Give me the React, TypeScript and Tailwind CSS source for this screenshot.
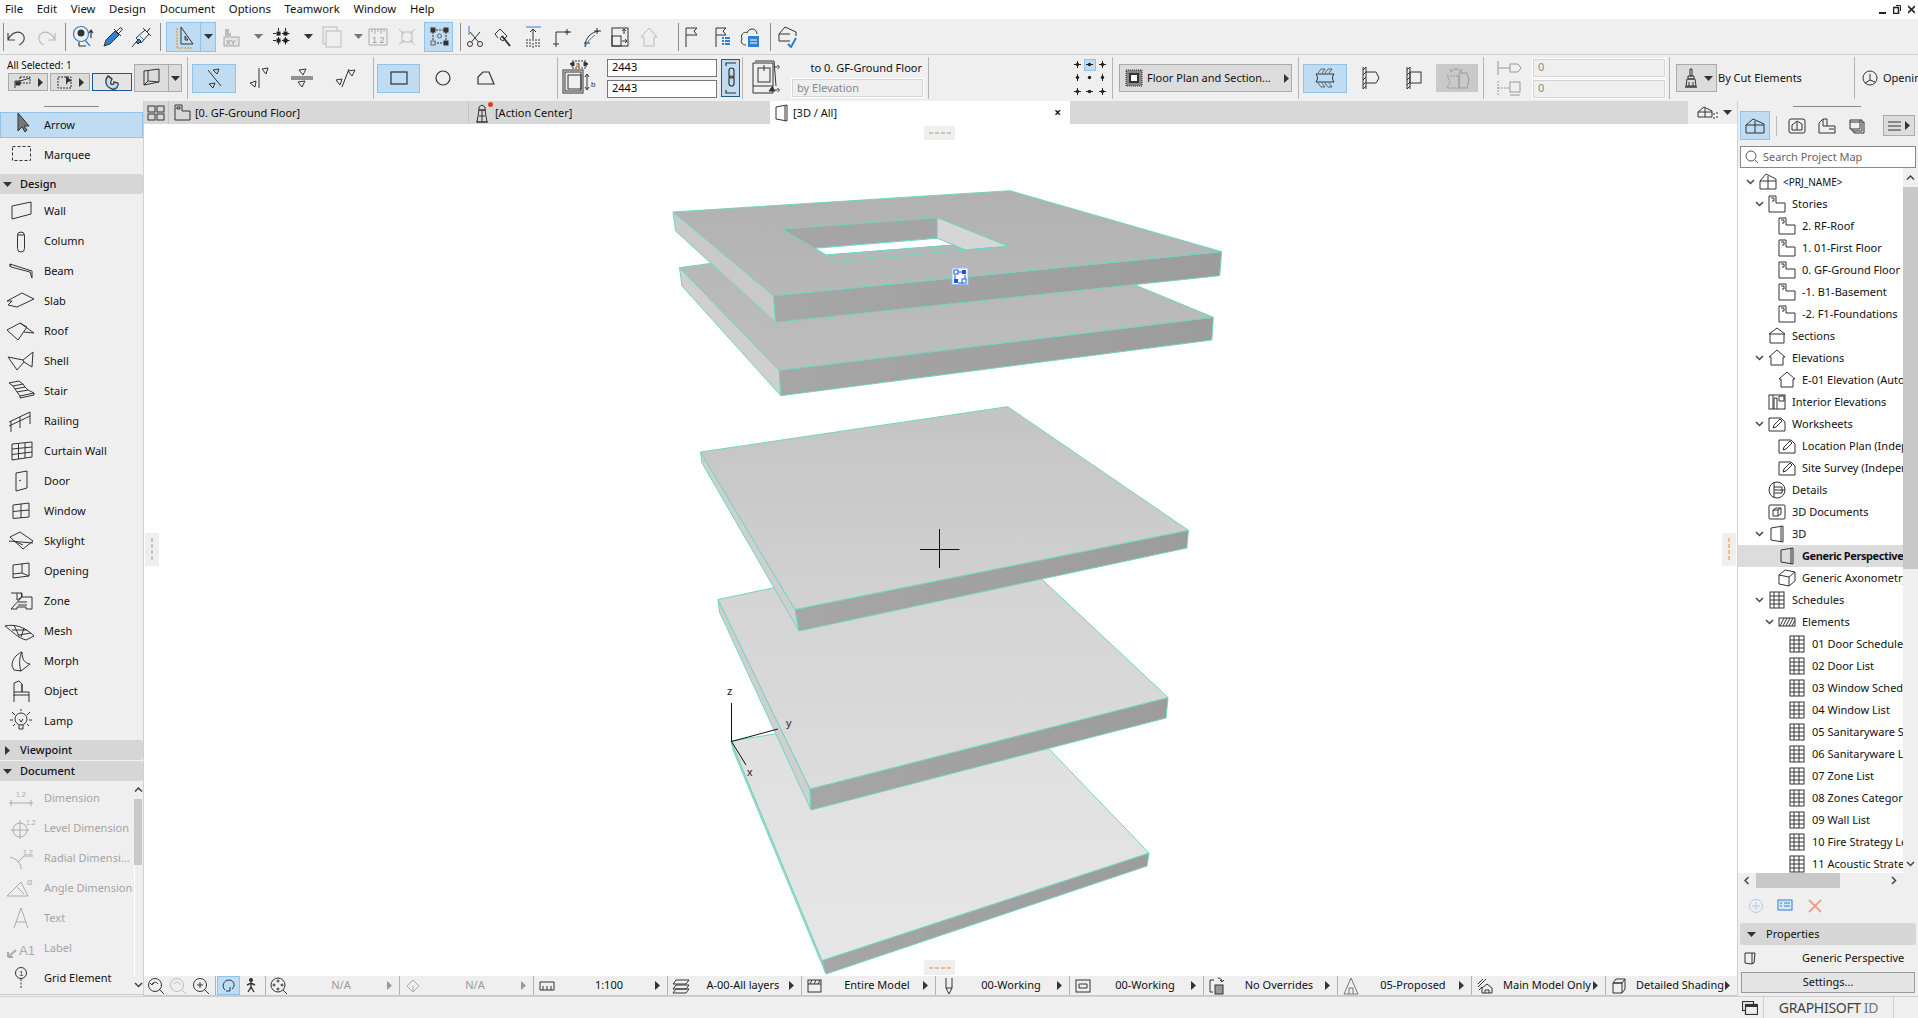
// App.tsx: BIM editor main window (3D view with selected slabs)
import React from 'react'

type SProps = { w: number; h: number; c?: string; sw?: number; fill?: string; className?: string; children: React.ReactNode }

const S = ({ w, h, c = '#333', sw = 1, fill = 'none', className = '', children }: SProps) => (
  <svg width={w} height={h} viewBox={`0 0 ${w} ${h}`} fill={fill} stroke={c} strokeWidth={sw} className={`shrink-0 ${className}`}>
    {children}
  </svg>
)

const Down = ({ c = '#333' }: { c?: string }) => (
  <svg width="9" height="5" viewBox="0 0 9 5" className="shrink-0"><path d="M0 0H9L4.5 5Z" fill={c} /></svg>
)
const Right = ({ c = '#333' }: { c?: string }) => (
  <svg width="5" height="9" viewBox="0 0 5 9" className="shrink-0"><path d="M0 0L5 4.5L0 9Z" fill={c} /></svg>
)
const Chev = ({ d = 'down' }: { d?: 'down' | 'up' | 'left' | 'right' }) => {
  const p = d === 'down' ? 'M1 1L4.5 4.5L8 1' : d === 'up' ? 'M1 4.5L4.5 1L8 4.5' : d === 'left' ? 'M4.5 1L1 4.5L4.5 8' : 'M1 1L4.5 4.5L1 8'
  const small = d === 'down' || d === 'up'
  return (
    <svg width={small ? 9 : 6} height={small ? 6 : 9} viewBox={small ? '0 0 9 6' : '0 0 6 9'} fill="none" stroke="#444" strokeWidth="1.5" className="shrink-0">
      <path d={p} />
    </svg>
  )
}

const Cell = ({ className, children }: { className: string; children?: React.ReactNode }) => (
  <div className={`h-full shrink-0 flex items-center justify-center ${className}`}>{children}</div>
)
const Sep = () => <div className="w-px h-[28px] bg-[#8c8c8c] shrink-0" />

// top toolbar icons
const icons = {
  undo: <S w={22} h={20} c="#444" sw={1.2}><path d="M2 6V13H9M2 13C5 6 11 4 15 6C20 9 19 15 13 18" /></S>,
  redo: <S w={22} h={20} c="#bbb" sw={1.2}><path d="M20 6V13H13M20 13C17 6 11 4 7 6C2 9 3 15 9 18" /></S>,
  find: <S w={22} h={24} c="#2e7fd6" sw={1.2}><circle cx="9" cy="9" r="7.5" /><circle cx="9" cy="8" r="3.5" fill="#333" stroke="none" /><path d="M13 15L18 21" /><path d="M19 6V13M17 8L19 5L21 8" stroke="#333" /><path d="M7 21H14M7 17V21" stroke="#333" /></S>,
  dropper: <S w={22} h={24} c="#333"><path d="M3 21L5 15L14 6L18 10L9 19Z" fill="#2e7fd6" /><path d="M13 4L20 11M16 6L19 3C20 2 22 4 21 5L18 8" /></S>,
  syringe: <S w={22} h={24} c="#333"><path d="M2 22L6 17M6 13L11 18L19 9L15 5Z" /><path d="M6 17L9 14L11 16L8 19Z" fill="#2e7fd6" /><path d="M13 3L21 11M17 7L20 3" /><path d="M10 11L14 15" stroke="#2e7fd6" /></S>,
  ruler: <S w={22} h={24} c="#333"><path d="M8 2V19H20Z" /><path d="M12 11V15H15Z" /><path d="M4 3V23H20" stroke="#e8891a" strokeDasharray="2 1" /></S>,
  xy: <S w={18} h={20} c="#aaa"><path d="M2 2H6V6H8V9H2Z" fill="#bbb" stroke="none" /><rect x="1" y="10" width="15" height="9" fill="#e4e4e4" /><text x="3" y="18" fontSize="7" fill="#888" stroke="none" fontFamily="Liberation Sans">XY</text></S>,
  grid: <S w={20} h={20} c="#222"><path d="M6.5 1V19M13.5 1V19M1 6.5H19M1 13.5H19" strokeDasharray="3 1.5" /><rect x="5" y="5" width="3" height="3" fill="#222" /><rect x="12" y="5" width="3" height="3" fill="#222" /><rect x="5" y="12" width="3" height="3" fill="#222" /><rect x="12" y="12" width="3" height="3" fill="#222" /></S>,
  layers: <S w={20} h={22} c="#bbb"><rect x="1" y="1" width="14" height="17" /><rect x="4" y="5" width="15" height="16" fill="#efefef" /></S>,
  scale12: <S w={20} h={18} c="#aaa"><path d="M1 1V17H19V1H1M4 1V4M7 1V6M10 1V4M13 1V6M16 1V4" /><text x="4" y="15" fontSize="9" fill="#999" stroke="none" fontFamily="Liberation Sans">1 2</text></S>,
  cross: <S w={16} h={16} c="#bbb"><rect x="3" y="3" width="10" height="10" /><path d="M0 0L5 5M16 0L11 5M0 16L5 11M16 16L11 11" /></S>,
  sel: <S w={22} h={22} c="#333"><rect x="5" y="4" width="13" height="13" strokeDasharray="2 1" /><rect x="3" y="2" width="4" height="4" fill="#333" /><rect x="16" y="2" width="4" height="4" fill="#333" /><rect x="3" y="15" width="4" height="4" fill="#bfdcf3" stroke="#666" /><rect x="16" y="15" width="4" height="4" fill="#333" /><circle cx="11.5" cy="10" r="2" stroke="#666" /></S>,
  scissors: <S w={18} h={24} c="#333"><path d="M3 1V10" stroke="#2e7fd6" /><circle cx="4" cy="19" r="2.5" /><circle cx="14" cy="19" r="2.5" /><path d="M5.5 17L14 7M12.5 17L4 7" /></S>,
  bucket: <S w={22} h={22} c="#333"><path d="M3 8L8 3L15 10L11 15L8 13L10 10" /><path d="M10 10L18 20" strokeWidth="2" /><path d="M3 8L6 12" /></S>,
  extend: <S w={20} h={24} c="#333"><path d="M3 2H18" stroke="#2e7fd6" /><path d="M10 4V16M7 7L10 4L13 7" /><path d="M4 14V23M7 14V23M10 18V23M13 14V23M16 14V23" strokeDasharray="2 1" /></S>,
  corner: <S w={20} h={22} c="#333"><path d="M4 21V6H17" /><path d="M1 18H7M15 3V9M13 6H19" /></S>,
  arc: <S w={20} h={22} c="#333"><path d="M3 21C3 12 9 6 17 5" /><path d="M15 2V8M12 5H19M2 17H8" /><path d="M3 21C5 16 9 12 13 9" stroke="#2e7fd6" /></S>,
  box: <S w={18} h={20} c="#333"><rect x="1" y="1" width="16" height="18" /><rect x="1" y="9" width="9" height="10" /><path d="M13 2V7M11 4L13 2L15 4M11 14H16M14 12L16 14L14 16" /></S>,
  houseG: <S w={18} h={22} c="#bbb"><path d="M1 11L9 2L17 11H14V20H4V11Z" /></S>,
  flag: <S w={14} h={20} c="#333"><path d="M2 20V1H13L10 4L13 8H2" /></S>,
  flagList: <S w={16} h={20} c="#333"><path d="M2 20V1H12L9 4L12 8H2" /><path d="M8 11H10M8 14H10M8 17H10M11 11H16M11 14H16M11 17H16" stroke="#2e7fd6" strokeWidth="2" /></S>,
  cloud: <S w={20} h={22} c="#333"><path d="M6 19C2 19 0 16 2 13C0 8 5 5 7 7C9 1 17 2 17 8" /><rect x="8" y="10" width="11" height="11" fill="#2e7fd6" stroke="none" /><path d="M10 14H17M10 17H17" stroke="#fff" /></S>,
  houseCheck: <S w={20} h={22} c="#333"><path d="M1 8L7 1L18 6V10M1 8V15H12M1 8H12" /><path d="M10 18L13 21L18 12" stroke="#2e7fd6" strokeWidth="2" /></S>,
}

const Blue = ({ className, children }: { className: string; children?: React.ReactNode }) => (
  <div className={`shrink-0 flex items-center justify-center bg-[#bfdcf3] border border-[#8fc3ec] ${className}`}>{children}</div>
)

function TopBar() {
  return (
    <div className="h-[36px] flex items-center border-b border-[#d0d0d0] shrink-0">
      <Cell className="w-[3px]" /><Sep />
      <Cell className="w-[26px]">{icons.undo}</Cell>
      <Cell className="w-[32px]">{icons.redo}</Cell>
      <Cell className="w-[3px]" /><Sep />
      <Cell className="w-[34px]">{icons.find}</Cell>
      <Cell className="w-[24px]">{icons.dropper}</Cell>
      <Cell className="w-[34px]">{icons.syringe}</Cell>
      <Cell className="w-[2px]" /><Sep />
      <Cell className="w-[5px]" />
      <Blue className="w-[50px] h-[30px]">
        <div className="w-[33px] flex justify-center">{icons.ruler}</div>
        <div className="w-px h-full bg-[#8fc3ec]" />
        <div className="flex-1 flex justify-center"><Down /></div>
      </Blue>
      <Cell className="w-[32px]">{icons.xy}</Cell>
      <Cell className="w-[20px]"><Down c="#777" /></Cell>
      <Cell className="w-[28px]">{icons.grid}</Cell>
      <Cell className="w-[24px]"><Down /></Cell>
      <Cell className="w-[24px]">{icons.layers}</Cell>
      <Cell className="w-[28px]"><Down c="#777" /></Cell>
      <Cell className="w-[12px]">{icons.scale12}</Cell>
      <Cell className="w-[6px]" />
      <Cell className="w-[34px]">{icons.cross}</Cell>
      <Blue className="w-[29px] h-[30px]">{icons.sel}</Blue>
      <Cell className="w-[7px]" /><Sep />
      <Cell className="w-[28px]">{icons.scissors}</Cell>
      <Cell className="w-[28px]">{icons.bucket}</Cell>
      <Cell className="w-[32px]">{icons.extend}</Cell>
      <Cell className="w-[26px]">{icons.corner}</Cell>
      <Cell className="w-[34px]">{icons.arc}</Cell>
      <Cell className="w-[22px]">{icons.box}</Cell>
      <Cell className="w-[36px]">{icons.houseG}</Cell>
      <Cell className="w-[11px]" /><Sep />
      <Cell className="w-[24px]">{icons.flag}</Cell>
      <Cell className="w-[38px]">{icons.flagList}</Cell>
      <Cell className="w-[18px]">{icons.cloud}</Cell>
      <Cell className="w-[11px]" /><Sep />
      <Cell className="w-[34px]">{icons.houseCheck}</Cell>
    </div>
  )
}

const Grp = ({ className, children }: { className: string; children: React.ReactNode }) => (
  <div className={`h-[42px] shrink-0 flex items-center border-r border-[#b4b4b4] ${className}`}>{children}</div>
)

const GrayBtn = ({ className, children }: { className: string; children?: React.ReactNode }) => (
  <div className={`shrink-0 flex items-center bg-[#dcdcdc] border border-[#aaa] ${className}`}>{children}</div>
)

const Field = ({ children, gray }: { children: React.ReactNode; gray?: boolean }) => (
  <div className={`h-[18px] flex items-center pl-[4px] border ${gray ? 'bg-[#efefef] border-[#d4d4d4] outline outline-1 outline-white text-[#888]' : 'bg-white border-[#777] text-black'}`}>{children}</div>
)

// the nine anchor points of the size box
const anchors = [
  'M4.5 1V8M1 4.5H8', 'M1 4.5H8', 'M4.5 1V8M1 4.5H8',
  'M4.5 1V8', '', 'M4.5 1V8',
  'M4.5 1V8M1 4.5H8', 'M1 4.5H8', 'M4.5 1V8M1 4.5H8',
]

function InfoBar() {
  return (
    <div className="h-[46px] flex items-center shrink-0 text-[11px] text-[#111]">
      <Grp className="w-[188px] items-start">
        <div className="w-[134px] pl-[7px] h-full flex flex-col">
          <div className="h-[14px] mt-[1px] text-[10px] leading-[14px] whitespace-nowrap">All Selected: 1</div>
          <div className="flex gap-[2px] ml-px mt-[1px]">
            <GrayBtn className="w-[40px] h-[18px] justify-center gap-[6px]">
              <S w={18} h={14} c="#333"><path d="M1 13V6H6L16 3" /><rect x="6" y="2" width="10" height="6" strokeDasharray="2 1" /><path d="M2 7H6V10H2Z" fill="#333" /></S>
              <Right />
            </GrayBtn>
            <GrayBtn className="w-[40px] h-[18px] justify-center gap-[6px]">
              <S w={16} h={14} c="#333"><rect x="1" y="2" width="13" height="11" strokeDasharray="2 1" /><path d="M9 1L15 6L11 7L9 10Z" fill="#333" stroke="none" /></S>
              <Right />
            </GrayBtn>
            <div className="w-[40px] h-[18px] bg-[#e4e4e4] border border-[#1a5a96] flex items-center justify-center">
              <S w={18} h={18} c="#444" sw={1.4}><path d="M5 3C1 8 3 14 9 16C13 17 16 13 15 10L11 9C11 11 10 12 8 11C7 10 8 8 9 6Z" fill="#bfdcf3" /><path d="M5 3L9 6" /></S>
            </div>
          </div>
        </div>
        <GrayBtn className="w-[48px] h-[28px] mt-[7px] justify-start">
          <div className="w-[34px] flex justify-center border-r border-[#aaa] h-full items-center">
            <S w={20} h={20} c="#333"><path d="M2 3L17 1V14L2 17Z" /><path d="M6 2.5V13L2 17M6 13L17 14" /></S>
          </div>
          <div className="flex-1 flex justify-center"><Down /></div>
        </GrayBtn>
      </Grp>
      <Grp className="w-[186px]">
        <div className="w-[4px]" />
        <Blue className="w-[44px] h-[29px]">
          <S w={26} h={22} c="#333"><path d="M7 3L20 19" /><path d="M12 3L18 2L16 7Z M8 17L14 16L12 21Z" /></S>
        </Blue>
        <Cell className="w-[45px]"><S w={26} h={24} c="#333"><path d="M13 2V22" /><path d="M16 3L22 2L20 8Z M4 17L10 15L9 21Z" /></S></Cell>
        <Cell className="w-[42px]"><S w={26} h={24} c="#333"><path d="M2 11H24M2 13H24" /><path d="M10 4L17 3L14 9Z M9 16L16 15L13 21Z" /></S></Cell>
        <Cell className="w-[44px]"><S w={26} h={24} c="#333"><path d="M10 21L17 3" /><path d="M16 5L23 4L20 10Z M4 14L10 13L8 19Z" /></S></Cell>
      </Grp>
      <Grp className="w-[184px]">
        <div className="w-[3px]" />
        <Blue className="w-[43px] h-[29px]"><S w={18} h={14} c="#333" sw={1.2}><rect x="1" y="1" width="16" height="12" /></S></Blue>
        <Cell className="w-[46px]"><S w={16} h={16} c="#333" sw={1.2}><circle cx="8" cy="8" r="7" /></S></Cell>
        <Cell className="w-[40px]"><S w={18} h={14} c="#333" sw={1.2}><path d="M1 6L6 1H12L17 13H1Z" /></S></Cell>
      </Grp>
      <Grp className="w-[185px]">
        <Cell className="w-[43px]">
          <S w={38} h={38} c="#333"><rect x="11" y="2" width="14" height="7" strokeDasharray="2 1" /><path d="M9 5L13 3V7ZM27 5L23 3V7Z" fill="#333" /><text x="15" y="8" fontSize="7" fill="#333" stroke="none" fontFamily="Liberation Sans">a</text><rect x="2" y="11" width="20" height="23" /><rect x="4" y="13" width="16" height="19" /><rect x="7" y="16" width="13" height="14" /><path d="M26 16V30M24 18L26 15L28 18M24 28L26 31L28 28" /><text x="30" y="28" fontSize="8" fill="#333" stroke="none" fontFamily="Liberation Sans">b</text></S>
        </Cell>
        <div className="w-[6px]" />
        <div className="w-[110px] flex flex-col gap-[3px]"><Field>2443</Field><Field>2443</Field></div>
        <div className="w-[4px]" />
        <div className="w-[19px] h-[38px] bg-[#bfdcf3] border border-[#1a5a96] flex items-center justify-center">
          <S w={14} h={34} c="#333" sw={1.2}><path d="M2 5V2H12M2 29V32H12" /><rect x="5" y="7" width="5" height="10" rx="2.5" /><rect x="5" y="15" width="5" height="10" rx="2.5" /></S>
        </div>
      </Grp>
      <Grp className="w-[186px]">
        <Cell className="w-[49px]">
          <S w={36} h={36} c="#333"><path d="M3 3H23V33H3Z" /><path d="M5 1H24L26 26M3 26H23" /><rect x="8" y="8" width="12" height="14" /><path d="M14 5V11" /><path d="M25 7H30M28 5V9M25 30H30M28 28V32" strokeDasharray="2 1" /><path d="M19 31L22 27L25 31Z" fill="#333" /></S>
        </Cell>
        <div className="w-[131px] h-full flex flex-col pt-px">
          <div className="h-[20px] leading-[20px] text-right pr-px whitespace-nowrap">to 0. GF-Ground Floor</div>
          <div className="mt-px"><Field gray>by Elevation</Field></div>
        </div>
      </Grp>
      <Grp className="w-[184px]">
        <div className="ml-[142px] grid grid-cols-3 w-[38px] h-[40px] place-items-center">
          {anchors.map((d, i) => (
            <div key={i} className={`w-[12px] h-[12px] flex items-center justify-center ${i === 1 ? 'bg-[#bfdcf3] border border-[#8fc3ec]' : ''}`}>
              <S w={9} h={9} c="#222"><circle cx="4.5" cy="4.5" r="1.7" fill="#222" stroke="none" />{d && <path d={d} />}</S>
            </div>
          ))}
        </div>
      </Grp>
      <Grp className="w-[186px]">
        <div className="w-[6px]" />
        <GrayBtn className="w-[173px] h-[28px]">
          <div className="w-[27px] flex justify-center">
            <S w={18} h={18} c="#333"><rect x="1" y="1" width="16" height="16" fill="#888" strokeDasharray="1 1" /><rect x="5" y="5" width="8" height="8" fill="#fff" strokeWidth="2" /></S>
          </div>
          <span className="whitespace-nowrap">Floor Plan and Section...</span>
          <div className="flex-1 flex justify-end pr-[2px]"><Right /></div>
        </GrayBtn>
      </Grp>
      <Grp className="w-[185px]">
        <div className="w-[4px]" />
        <Blue className="w-[44px] h-[29px]">
          <S w={26} h={24} c="#333"><path d="M4 8H22C20 11 20 13 22 16H4C6 13 6 11 4 8Z" /><path d="M6 7L9 3H13L10 7M13 7L16 3H20L17 7M6 17L9 21H13L10 17M13 17L16 21H20L17 17" strokeWidth="0.7" /></S>
        </Blue>
        <Cell className="w-[48px]"><S w={22} h={26} c="#333"><path d="M3 2V24M6 2V24" /><path d="M6 7H16L19 13L16 18H6" /><path d="M3 5L6 2M3 10L6 7M3 15L6 12M3 20L6 17M3 24L6 21" /></S></Cell>
        <Cell className="w-[38px]"><S w={20} h={26} c="#333"><path d="M3 2V24M6 2V24" /><rect x="6" y="7" width="11" height="11" /><path d="M3 5L6 2M3 10L6 7M3 15L6 12M3 20L6 17M3 24L6 21" /></S></Cell>
        <div className="w-[3px]" />
        <div className="w-[42px] h-[28px] bg-[#c9c9c9] flex items-center justify-center">
          <S w={28} h={24} c="#999"><path d="M4 10H16V22H4L7 16Z" strokeDasharray="2 1" /><path d="M16 7H24L26 14L24 22H16Z" /><path d="M8 6C11 2 15 2 18 6M8 6L7 3M18 6L19 3" /></S>
        </div>
      </Grp>
      <Grp className="w-[186px]">
        <Cell className="w-[49px]">
          <S w={30} h={38} c="#999"><path d="M4 2V16M4 9H16" /><path d="M16 5H24L27 9L24 13H16Z" /><path d="M4 22V36M4 29H16" strokeDasharray="2 1" /><rect x="16" y="23" width="10" height="10" /><path d="M16 36H26" /></S>
        </Cell>
        <div className="w-[132px] flex flex-col gap-[3px]"><Field gray>0</Field><Field gray>0</Field></div>
      </Grp>
      <Grp className="w-[185px]">
        <div className="w-[6px]" />
        <GrayBtn className="w-[41px] h-[28px]">
          <div className="w-[27px] flex justify-center">
            <S w={14} h={20} c="#333"><path d="M6 1H8V8H6ZM4 8H10V11H4ZM3 11H11L12 18H2Z" /><path d="M5 14V18M9 14V18" /><path d="M1 19H13" strokeWidth="1.4" /></S>
          </div>
          <Down />
        </GrayBtn>
        <span className="ml-[1px] whitespace-nowrap">By Cut Elements</span>
      </Grp>
      <div className="flex-1 h-[42px] flex items-center overflow-hidden">
        <div className="w-[7px] shrink-0" />
        <S w={16} h={16} c="#333"><circle cx="8" cy="8" r="7" /><path d="M8 4V10L3 13M8 10L13 12" /></S>
        <span className="ml-[5px] whitespace-nowrap">Opening</span>
      </div>
    </div>
  )
}

type Tool = { name: string; icon: React.ReactNode }

const tools: Tool[] = [
  { name: 'Wall', icon: <path d="M12 8L31 4V16L12 21Z" /> },
  { name: 'Column', icon: <><rect x="17.5" y="4" width="7" height="20" rx="3.5" /><path d="M17.5 7H24.5" /></> },
  { name: 'Beam', icon: <path d="M10 6L32 13V20L30 14L11 9ZM10 6V9" /> },
  { name: 'Slab', icon: <path d="M7 13L22 5L34 11L17 19L8 17L12 13Z" /> },
  { name: 'Roof', icon: <path d="M7 12L20 5L27 9L18 22ZM20 5L34 15L24 14" /> },
  { name: 'Shell', icon: <path d="M8 9L23 12L33 4L32 19L24 14L17 22ZM23 12L24 14" /> },
  { name: 'Stair', icon: <path d="M9 5L19 3L23 6L13 8ZM13 8L15 11L25 9L23 6M15 11L17 14L28 12L25 9M17 14L20 18L34 15L28 12M20 18V20L34 17V15" /> },
  { name: 'Railing', icon: <path d="M9 18L30 8M9 14L30 4M11 13V24M20 9V20M30 4V16" /> },
  { name: 'Curtain Wall', icon: <path d="M12 6L32 4V19L12 22ZM12 11L32 9M12 16.5L32 14M18.5 5.5V21M25 5V20" /> },
  { name: 'Door', icon: <path d="M16 5L27 3V20L16 23ZM19 13L21 12" /> },
  { name: 'Window', icon: <path d="M13 7L29 5V19L13 20.5ZM13 13.5L29 12M21 6V20" /> },
  { name: 'Skylight', icon: <path d="M10 9L20 4L33 13L23 21ZM9 13L33 15M14 13L23 17" /> },
  { name: 'Opening', icon: <path d="M13 7L29 5V18L13 20ZM13 16L22 15L29 18M22 5.5V15" /> },
  { name: 'Zone', icon: <path d="M11 5H22V9L21 5M22 9H32V21H26V19H17V21H11ZM17 5V12L22 9M18 14H27M18 17H27" /> },
  { name: 'Mesh', icon: <path d="M5 8C14 6 24 8 34 18L26 22C18 20 13 14 5 8ZM14 7L19 18M24 10L21 19M12 12L27 12M19 17L31 15" /> },
  { name: 'Morph', icon: <path d="M12 18C12 12 15 7 22 4C22 12 25 15 30 16L21 23L14 22ZM22 4C19 10 19 17 21 23" /> },
  { name: 'Object', icon: <path d="M14 18V5L19 3L22 6V14M14 14H29V17H14M14 17V24M29 17V24M22 6V14" /> },
  { name: 'Lamp', icon: <><circle cx="21" cy="11" r="6" /><path d="M19 11L21 14L23 11M19 17V21H23V17M12 4L15 7M30 4L27 7M10 12H13M32 12H29M13 18L15 16M29 18L27 16M21 1V3" /></> },
]

const docTools: Tool[] = [
  { name: 'Dimension', icon: <><path d="M9 18H33M11 15V21M31 15V21" /><text x="16" y="12" fontSize="7" fill="#aaa" stroke="none" fontFamily="Liberation Sans">1.2</text></> },
  { name: 'Level Dimension', icon: <><circle cx="20" cy="15" r="7" /><path d="M20 5V24M11 15H29" /><text x="26" y="10" fontSize="7" fill="#aaa" stroke="none" fontFamily="Liberation Sans">1.2</text></> },
  { name: 'Radial Dimensi...', icon: <><path d="M10 12C17 14 21 18 21 24M18 17L24 11H33" /><text x="23" y="10" fontSize="7" fill="#aaa" stroke="none" fontFamily="Liberation Sans">1.2</text></> },
  { name: 'Angle Dimension', icon: <><path d="M7 21H28L21 7ZM17 12L24 19" /><text x="27" y="10" fontSize="9" fill="#aaa" stroke="none" fontFamily="Liberation Sans">α</text></> },
  { name: 'Text', icon: <path d="M14 23L21 3L28 23M16 17H26" /> },
  { name: 'Label', icon: <><path d="M8 22L16 15M8 22V17M8 22H13" strokeWidth="2" /><text x="19" y="20" fontSize="13" fill="#aaa" stroke="none" fontFamily="Liberation Sans">A1</text></> },
]

const ToolIcon = ({ children, c = '#333' }: { children: React.ReactNode; c?: string }) => (
  <svg width="40" height="26" viewBox="0 0 40 26" fill="none" stroke={c} strokeWidth="1" className="shrink-0">{children}</svg>
)

const ToolHead = ({ label, open }: { label: string; open: boolean }) => (
  <div className="h-[20px] bg-[#d6d6d6] rounded-r-[3px] flex items-center shrink-0">
    <div className="w-[20px] flex justify-center pr-[5px]">{open ? <Down /> : <Right />}</div>
    <span className="text-[11px] font-medium">{label}</span>
  </div>
)

function ToolBox() {
  return (
    <div className="w-[144px] shrink-0 flex flex-col border-r border-[#d0d0d0] text-[11px] text-[#111]">
      <div className="h-[11px] shrink-0 flex items-start justify-center pt-[5px]"><div className="w-[55px] h-px bg-[#888]" /></div>
      <div className="h-[26px] shrink-0 flex items-center bg-[#bfdcf3] border border-[#8fc3ec]">
        <ToolIcon c="#333"><path d="M17 1V19L21 15L24 20L26 18L23 14H28Z" fill="#777" /></ToolIcon>
        <span className="ml-[3px]">Arrow</span>
      </div>
      <div className="h-[34px] shrink-0 flex items-center">
        <ToolIcon><rect x="12.5" y="4.5" width="18" height="14" strokeDasharray="3 2" /></ToolIcon>
        <span className="ml-[4px]">Marquee</span>
      </div>
      <div className="h-[2px] shrink-0" />
      <ToolHead label="Design" open />
      <div className="h-[2px] shrink-0" />
      {tools.map(t => (
        <div key={t.name} className="h-[30px] shrink-0 flex items-center">
          <ToolIcon>{t.icon}</ToolIcon>
          <span className="ml-[4px]">{t.name}</span>
        </div>
      ))}
      <div className="h-[4px] shrink-0" />
      <ToolHead label="Viewpoint" open={false} />
      <div className="h-px shrink-0" />
      <ToolHead label="Document" open />
      <div className="h-[214px] shrink-0 flex border-b border-[#c8c8c8]">
        <div className="w-[133px] pt-[2px] shrink-0">
          {docTools.map(t => (
            <div key={t.name} className="h-[30px] flex items-center text-[#a4a4a4]">
              <ToolIcon c="#aaa">{t.icon}</ToolIcon>
              <span className="ml-[4px] whitespace-nowrap">{t.name}</span>
            </div>
          ))}
          <div className="h-[30px] flex items-center">
            <ToolIcon><circle cx="21" cy="8" r="5.5" /><text x="19" y="11" fontSize="8" fill="#333" stroke="none" fontFamily="Liberation Sans">1</text><path d="M21 14V24" strokeDasharray="2 1.5" /></ToolIcon>
            <span className="ml-[4px]">Grid Element</span>
          </div>
        </div>
        <div className="w-[10px] flex flex-col items-center">
          <div className="h-[18px] flex items-center justify-center"><Chev d="up" /></div>
          <div className="w-[8px] h-[66px] bg-[#c8c8c8]" />
          <div className="flex-1 w-[8px] border-l border-white" />
          <div className="h-[18px] flex items-center justify-center"><Chev /></div>
        </div>
      </div>
    </div>
  )
}

const EDGE = '#6fd6c2'

function Slab({ top, front, side, grad }: { top: string; front: string; side?: string; grad: string }) {
  return (
    <g stroke={EDGE} strokeWidth="1" strokeLinejoin="round">
      {side && <path d={side} fill="#cfcfcf" />}
      <path d={front} fill="url(#front)" />
      <path d={top} fill={`url(#${grad})`} />
    </g>
  )
}

const DashH = ({ c }: { c: string }) => (
  <svg width="22" height="2" viewBox="0 0 22 2"><path d="M0 1H22" stroke={c} strokeDasharray="4 2" /></svg>
)
const DashV = ({ c }: { c: string }) => (
  <svg width="2" height="24" viewBox="0 0 2 24"><path d="M1 0V24" stroke={c} strokeDasharray="4 2" /></svg>
)

function Canvas() {
  return (
    <div className="flex-1 relative bg-white overflow-hidden">
      <svg width="1593" height="852" viewBox="144 124 1593 852" className="absolute inset-0">
        <defs>
          <linearGradient id="front" x1="0" x2="1" y1="0" y2="0"><stop offset="0" stopColor="#a6a6a6" /><stop offset="1" stopColor="#9c9c9c" /></linearGradient>
          <linearGradient id="t1" x1="0" x2="0" y1="0" y2="1"><stop offset="0" stopColor="#b1b1b1" /><stop offset="1" stopColor="#b8b8b8" /></linearGradient>
          <linearGradient id="t2" x1="0" x2="0" y1="0" y2="1"><stop offset="0" stopColor="#b5b5b5" /><stop offset="1" stopColor="#bdbdbd" /></linearGradient>
          <linearGradient id="t3" x1="0" x2="0" y1="0" y2="1"><stop offset="0" stopColor="#c4c4c4" /><stop offset="1" stopColor="#d2d2d2" /></linearGradient>
          <linearGradient id="t4" x1="0" x2="0" y1="0" y2="1"><stop offset="0" stopColor="#d2d2d2" /><stop offset="1" stopColor="#dcdcdc" /></linearGradient>
          <linearGradient id="t5" x1="0" x2="0" y1="0" y2="1"><stop offset="0" stopColor="#dedede" /><stop offset="1" stopColor="#e6e6e6" /></linearGradient>
        </defs>
        {/* bottom slab */}
        <Slab grad="t5"
          top="M731 741L1000 698L1149 853L822 960.5Z"
          front="M822 960.5L1149 853L1147 866L826 974Z"
          side="M731 741L822 960.5L826 974L733 750Z" />
        <Slab grad="t4"
          top="M718 599.5L1000 540L1168 697.5L810 789Z"
          front="M810 789L1168 697.5L1166 718L811 810Z"
          side="M718 599.5L810 789L811 810L719.5 612Z" />
        <Slab grad="t3"
          top="M700.5 452L1007.7 406.7L1188.4 530.3L795 609.5Z"
          front="M795 609.5L1188.4 530.3L1186.9 548L799 631Z"
          side="M700.5 452L795 609.5L799 631L702 463Z" />
        <Slab grad="t2"
          top="M679.5 267.7L990 225L1213.3 317.3L779.2 370.3Z"
          front="M779.2 370.3L1213.3 317.3L1211.8 340L780.8 395.7Z"
          side="M679.5 267.7L779.2 370.3L780.8 395.7L682 286Z" />
        {/* roof, with the opening cut through */}
        <g stroke={EDGE} strokeWidth="1" strokeLinejoin="round">
          <path d="M673 212L773.6 295.7L775.6 322.3L675.6 231Z" fill="#c9c9c9" />
          <path d="M773.6 295.7L1221.6 251.7L1219.7 275.7L775.6 322.3Z" fill="url(#front)" />
          <path d="M673 212L1010 190.7L1221.6 251.7L773.6 295.7Z" fill="url(#t1)" />
          <path d="M782.3 229L937.3 217.7V238.3L814.8 248.3Z" fill="#a5a5a5" />
          <path d="M937.3 217.7L1008.5 246.3L965 250L937.3 238.3Z" fill="#d6d6d6" />
          <path d="M814.8 248.3L937.3 238.3L954 245L826.6 255Z" fill="#fff" />
          <path d="M826.6 255L954 245L965 250L1008.5 246.3L834.5 261.7Z" fill="#b6b6b6" />
        </g>
        {/* edit-hotspot marker */}
        <g>
          <rect x="952" y="268" width="16" height="16.5" fill="#fff" stroke="#9db8f0" />
          <path d="M958 272H963M955 275V280M965 275V280M958 283H963" stroke="#1f55d6" />
          <rect x="954" y="270" width="4" height="4" fill="#fff" stroke="#1f55d6" />
          <rect x="962" y="270" width="4" height="4" fill="#1f55d6" />
          <rect x="954" y="279" width="4" height="4" fill="#1f55d6" />
          <rect x="962" y="279" width="4" height="4" fill="#fff" stroke="#1f55d6" />
        </g>
        {/* crosshair */}
        <path d="M939.5 529V568M920 549.5H959.5" stroke="#111" />
        {/* axes */}
        <path d="M731.5 741.5V703M731.5 741.5L778 729M731.5 741.5L746 765" stroke="#111" />
        <text x="727" y="695" fontSize="11" fill="#222" fontFamily="Liberation Sans">z</text>
        <text x="786" y="727" fontSize="11" fill="#222" fontFamily="Liberation Sans">y</text>
        <text x="747" y="776" fontSize="11" fill="#222" fontFamily="Liberation Sans">x</text>
      </svg>
      <div className="absolute left-[780px] top-[2px] w-[31px] h-[14px] bg-[#efefef] flex items-center justify-center"><DashH c="#b89878" /></div>
      <div className="absolute left-[780px] bottom-[1px] w-[31px] h-[15px] bg-[#efefef] flex items-center justify-center"><DashH c="#f08a24" /></div>
      <div className="absolute left-[1px] top-[409px] w-[14px] h-[33px] bg-[#efefef] flex items-center justify-center"><DashV c="#999" /></div>
      <div className="absolute right-[1px] top-[409px] w-[14px] h-[33px] bg-[#efefef] flex items-center justify-center"><DashV c="#f08a24" /></div>
    </div>
  )
}

function Tabs() {
  const floor = <S w={17} h={17} c="#333"><path d="M1 1H8V7H16V16H1Z" /><path d="M3 3H6V5H3Z" /></S>
  return (
    <div className="h-[23px] shrink-0 flex bg-[#d8d8d8] text-[11px] text-[#111]">
      <div className="w-[25px] h-full shrink-0 flex items-center justify-center border-r border-[#c4c4c4]">
        <S w={18} h={16} c="#333"><rect x="1" y="1" width="7" height="6" /><rect x="10" y="1" width="7" height="6" /><rect x="1" y="9" width="7" height="6" /><rect x="10" y="9" width="7" height="6" /></S>
      </div>
      <div className="w-[300px] shrink-0 flex items-center border-r border-[#c4c4c4] pl-[5px]">
        {floor}<span className="ml-[4px] pt-[2px] whitespace-nowrap">[0. GF-Ground Floor]</span>
      </div>
      <div className="w-[301px] shrink-0 flex items-center pl-[5px]">
        <div className="relative">
          <S w={16} h={20} c="#333"><path d="M3 19L5 7H11L13 19ZM2 19H14M4 7H12M5 7V4L8 2L11 4V7M8 7V19M5 13H11" /></S>
          <span className="absolute right-[-3px] top-[-1px] w-[5px] h-[5px] bg-[#f03a17] rounded-full" />
        </div>
        <span className="ml-[5px] pt-[2px] whitespace-nowrap">[Action Center]</span>
      </div>
      <div className="w-[300px] shrink-0 flex items-center bg-white pl-[4px]">
        <S w={15} h={18} c="#333"><path d="M2 3L13 1V17L2 15Z" /><path d="M11 2V17" /></S>
        <span className="ml-[4px] pt-[2px] whitespace-nowrap">[3D / All]</span>
        <span className="ml-auto mr-[9px] font-bold text-[12px]">×</span>
      </div>
      <div className="flex-1" />
      <div className="w-[49px] h-full shrink-0 bg-[#efefef] flex items-center pl-[9px]">
        <S w={22} h={14} c="#333"><path d="M1 11V6L7 1L15 5V11ZM1 6H15M8 2V11" /><path d="M17 7V9M17 11V13M19 7H21M19 11H21" /></S>
        <div className="ml-[4px]"><Down /></div>
      </div>
    </div>
  )
}

const Seg = ({ icon, label, gray, className = 'w-[134px]' }: { icon: React.ReactNode; label: string; gray?: boolean; className?: string }) => (
  <div className={`h-full shrink-0 flex items-center border-r border-[#b4b4b4] ${className}`}>
    <div className="w-[26px] flex justify-center">{icon}</div>
    <div className={`flex-1 text-center pl-[4px] whitespace-nowrap ${gray ? 'text-[#9a9a9a]' : ''}`}>{label}</div>
    <div className="w-[13px] pl-[1px]"><Right c={gray ? '#999' : '#333'} /></div>
  </div>
)

function NavBar() {
  return (
    <div className="h-[20px] shrink-0 flex items-center border-b border-[#c8c8c8] bg-[#efefef] text-[11px] text-[#111]">
      <Cell className="w-[23px]"><S w={18} h={18} c="#333"><circle cx="8" cy="8" r="6.5" /><path d="M12 12L17 17M5 8C5 5 9 4 11 7M5 8L3 6M5 8L7 6" /></S></Cell>
      <Cell className="w-[22px]"><S w={18} h={18} c="#bbb"><circle cx="8" cy="8" r="6.5" /><path d="M12 12L17 17M11 8C11 5 7 4 5 7" /></S></Cell>
      <Cell className="w-[23px]"><S w={18} h={18} c="#333"><circle cx="8" cy="8" r="6.5" /><path d="M12 12L17 17M8 5V11M5 8H11" /></S></Cell>
      <Cell className="w-[4px] border-r border-[#b4b4b4]" />
      <div className="w-[1px]" />
      <Blue className="w-[23px] h-full"><S w={15} h={15} c="#333"><path d="M4 12C0 8 3 2 8 2C13 2 15 8 11 11M9 9V13H5" /></S></Blue>
      <Cell className="w-[22px]"><S w={12} h={15} c="#333"><circle cx="6" cy="2" r="1.6" fill="#333" /><path d="M6 4V9L3 14M6 9L9 14M2 7L6 5L10 7" strokeWidth="1.4" /></S></Cell>
      <Cell className="w-[4px] border-r border-[#b4b4b4]" />
      <Seg label="N/A" gray icon={<S w={20} h={18} c="#333"><circle cx="9" cy="8" r="7" /><path d="M14 13L18 17" /><circle cx="9" cy="4" r="1" /><circle cx="9" cy="12" r="1" /><circle cx="5" cy="8" r="1" /><circle cx="13" cy="8" r="1" /></S>} />
      <Seg label="N/A" gray icon={<S w={16} h={16} c="#aaa"><path d="M2 8L8 2L14 8L8 14ZM8 14L8 8" /></S>} />
      <Seg label="1:100" icon={<S w={16} h={10} c="#333"><path d="M1 1H15V9H1ZM4 5V9M8 5V9M12 5V9" /></S>} />
      <Seg label="A-00-All layers" icon={<S w={18} h={18} c="#333"><path d="M4 3H17L14 7H1ZM4 8H17L14 12H1ZM4 12H17L14 16H1Z" /></S>} />
      <Seg label="Entire Model" icon={<S w={15} h={14} c="#333"><rect x="1" y="1" width="13" height="12" /><path d="M1 5H14M3 5L5 1M7 5L9 1M11 5L13 1" /></S>} />
      <Seg label="00-Working" icon={<S w={10} h={18} c="#333"><path d="M2 1V11L5 17L8 11V1M2 11H8" /></S>} />
      <Seg label="00-Working" icon={<S w={16} h={14} c="#333"><rect x="1" y="1" width="14" height="12" /><path d="M4 5H12V9H4Z" /></S>} />
      <Seg label="No Overrides" icon={<S w={16} h={18} c="#333"><path d="M1 3H5M1 3V15H4M9 1C11 1 13 2 13 5M11 3L13 5L15 3" /><rect x="6" y="8" width="8" height="9" fill="#999" /></S>} />
      <Seg label="05-Proposed" icon={<S w={16} h={18} c="#777"><path d="M1 17L8 1L15 17ZM6 17V11H10V17" /></S>} />
      <Seg label="Main Model Only" icon={<S w={16} h={16} c="#333"><path d="M1 6L6 1M1 9L9 1M2 12L5 9" /><path d="M5 10L10 6L15 10V15H5ZM8 15V12H12V15" /></S>} />
      <Seg label="Detailed Shading" className="flex-1 !border-r-0" icon={<S w={14} h={16} c="#333"><path d="M1 5L4 1H13L10 5ZM1 5H10V15H1ZM10 15L13 11V1" /></S>} />
    </div>
  )
}

type Node = { label: string; lv: 0 | 1 | 2 | 3 | 4; open?: boolean; icon: keyof typeof treeIcons; bold?: boolean }

const treeIcons = {
  house: <path d="M1 16V8L7 1L17 6V16ZM1 8H17M9 3V16" />,
  floor: <><path d="M1 1H8V8H17V17H1Z" /><path d="M3 3H6V6H4" /></>,
  section: <path d="M1 7L9 1L17 7ZM2 7V16H16V7" />,
  elevation: <path d="M1 8L9 1L17 8H15V16H3V8Z" />,
  interior: <><rect x="1" y="2" width="16" height="14" /><path d="M5 2V16M6 16V5H9V16M11 3H16V8H11Z" /></>,
  sheet: <><path d="M1 3H13L17 7V16H1Z" /><path d="M5 13L6 10L12 4L14 6L8 12Z" /></>,
  details: <><circle cx="9" cy="9" r="8" /><path d="M6 1.5V16.5M6 9H17M6 6H14V12H6" /></>,
  doc3d: <><rect x="1" y="2" width="16" height="14" rx="1" /><path d="M5 7L8 5H13V11L10 13H5ZM5 7H10V13M10 7L13 5" /></>,
  cube: <path d="M3 3L15 1V17L3 15ZM13 1.5V17" />,
  axo: <path d="M1 6L7 1L17 3V12L11 17L1 15ZM1 6L11 8V17M11 8L17 3" />,
  sched: <><rect x="2" y="1" width="14" height="16" /><path d="M2 5H16M2 9H16M2 13H16M6 1V17M11 1V17" /></>,
  hatch: <><rect x="1" y="5" width="16" height="8" /><path d="M2 13L6 5M5 13L9 5M8 13L12 5M11 13L15 5M14 13L17 7" /></>,
}

const tree: Node[] = [
  { label: '<PRJ_NAME>', lv: 0, open: true, icon: 'house' },
  { label: 'Stories', lv: 1, open: true, icon: 'floor' },
  { label: '2. RF-Roof', lv: 2, icon: 'floor' },
  { label: '1. 01-First Floor', lv: 2, icon: 'floor' },
  { label: '0. GF-Ground Floor', lv: 2, icon: 'floor' },
  { label: '-1. B1-Basement', lv: 2, icon: 'floor' },
  { label: '-2. F1-Foundations', lv: 2, icon: 'floor' },
  { label: 'Sections', lv: 1, icon: 'section' },
  { label: 'Elevations', lv: 1, open: true, icon: 'elevation' },
  { label: 'E-01 Elevation (Auto-rebuild)', lv: 2, icon: 'elevation' },
  { label: 'Interior Elevations', lv: 1, icon: 'interior' },
  { label: 'Worksheets', lv: 1, open: true, icon: 'sheet' },
  { label: 'Location Plan (Independent)', lv: 2, icon: 'sheet' },
  { label: 'Site Survey (Independent)', lv: 2, icon: 'sheet' },
  { label: 'Details', lv: 1, icon: 'details' },
  { label: '3D Documents', lv: 1, icon: 'doc3d' },
  { label: '3D', lv: 1, open: true, icon: 'cube' },
  { label: 'Generic Perspective', lv: 2, icon: 'cube', bold: true },
  { label: 'Generic Axonometry', lv: 2, icon: 'axo' },
  { label: 'Schedules', lv: 1, open: true, icon: 'sched' },
  { label: 'Elements', lv: 3, open: true, icon: 'hatch' },
  { label: '01 Door Schedule', lv: 4, icon: 'sched' },
  { label: '02 Door List', lv: 4, icon: 'sched' },
  { label: '03 Window Schedule', lv: 4, icon: 'sched' },
  { label: '04 Window List', lv: 4, icon: 'sched' },
  { label: '05 Sanitaryware Schedule', lv: 4, icon: 'sched' },
  { label: '06 Sanitaryware List', lv: 4, icon: 'sched' },
  { label: '07 Zone List', lv: 4, icon: 'sched' },
  { label: '08 Zones Category', lv: 4, icon: 'sched' },
  { label: '09 Wall List', lv: 4, icon: 'sched' },
  { label: '10 Fire Strategy Legend', lv: 4, icon: 'sched' },
  { label: '11 Acoustic Strategy', lv: 4, icon: 'sched' },
]

const indent = { 0: 'pl-[8px]', 1: 'pl-[17px]', 2: 'pl-[27px]', 3: 'pl-[27px]', 4: 'pl-[37px]' }

function ProjectMap() {
  return (
    <div className="w-[181px] shrink-0 flex flex-col border-l border-[#d0d0d0] text-[11px] text-[#111]">
      <div className="h-[10px] shrink-0 flex items-start justify-center pt-[5px]"><div className="w-[68px] h-px bg-[#888] ml-[-3px]" /></div>
      <div className="h-[35px] shrink-0 flex items-start pl-[2px]">
        <Blue className="w-[30px] h-[29px]"><S w={20} h={16} c="#333"><path d="M1 15V7L8 1L19 6V15ZM1 7H19M10 3V15" /></S></Blue>
        <div className="w-px h-[20px] bg-[#bbb] ml-[6px] mt-[5px]" />
        <div className="w-[40px] h-[29px] flex items-center justify-center"><S w={18} h={16} c="#333"><rect x="1" y="1" width="16" height="14" rx="2" /><path d="M4 12V7L9 3L14 6V12ZM9 4V12" /></S></div>
        <div className="w-[20px] h-[29px] flex items-center justify-center"><S w={18} h={16} c="#333"><path d="M1 15V5L5 1H9V8H17V15ZM5 1V8H9M11 11H16" /></S></div>
        <div className="w-[40px] h-[29px] flex items-center justify-center"><S w={16} h={17} c="#333"><path d="M1 3H11V12H1ZM1 5H11M3 12V14H13V3H11M5 14V16H15V5H13" /></S></div>
        <div className="w-[32px] h-[21px] mt-[4px] ml-[6px] bg-[#dcdcdc] border border-[#aaa] flex items-center justify-center gap-[4px]">
          <S w={13} h={10} c="#333"><path d="M0 1H13M0 5H13M0 9H13" /></S>
          <Right />
        </div>
      </div>
      <div className="h-[22px] shrink-0 mx-[2px] w-[176px] bg-white border border-[#888] flex items-center text-[#666]">
        <div className="w-[22px] flex justify-center"><S w={14} h={14} c="#555"><circle cx="6" cy="6" r="5" /><path d="M10 10L13 13" /></S></div>
        <span className="pt-px">Search Project Map</span>
      </div>
      <div className="flex-1 min-h-0 flex">
        <div className="w-[165px] shrink-0 bg-white pt-[3px] overflow-hidden">
          {tree.map(n => (
            <div key={n.label} className={`h-[22px] flex items-center whitespace-nowrap ${indent[n.lv]} ${n.bold ? 'bg-[#dcdcdc] font-bold tracking-[-0.4px]' : ''}`}>
              <div className="w-[12px] shrink-0 flex items-center justify-start">{n.open && <Chev />}</div>
              <svg width="18" height="18" viewBox="0 0 18 18" fill="none" stroke="#333" strokeWidth="1" className="ml-[1px] shrink-0">{treeIcons[n.icon]}</svg>
              <span className={`ml-[6px] ${n.lv === 0 ? 'text-[10px]' : ''}`}>{n.label}</span>
            </div>
          ))}
        </div>
        <div className="flex-1 flex flex-col items-center">
          <div className="h-[19px] flex items-center"><Chev d="up" /></div>
          <div className="w-full h-[382px] bg-[#c8c8c8]" />
          <div className="flex-1" />
          <div className="h-[18px] flex items-center"><Chev /></div>
        </div>
      </div>
      <div className="h-[15px] shrink-0 flex items-center">
        <div className="w-[18px] flex justify-center"><Chev d="left" /></div>
        <div className="w-[84px] h-full bg-[#c8c8c8]" />
        <div className="w-[63px] flex justify-end pr-[6px]"><Chev d="right" /></div>
      </div>
      <div className="h-[35px] shrink-0 flex items-center">
        <div className="w-[35px] flex justify-center pl-[1px]"><S w={16} h={16} c="#a9ccef"><circle cx="8" cy="8" r="6.5" /><path d="M8 4V12M4 8H12" /></S></div>
        <div className="w-[24px] flex justify-center"><S w={16} h={13} c="#2e7fd6" fill="#d8e8f8"><rect x="1" y="1" width="14" height="10" /><path d="M3 4H5M3 7H5M7 4H13M7 7H13" /></S></div>
        <div className="w-[36px] flex justify-center"><S w={14} h={14} c="#f0a090" sw={2}><path d="M1 1L13 13M13 1L1 13" /></S></div>
      </div>
      <div className="h-[22px] shrink-0 ml-[2px] w-[176px] bg-[#d6d6d6] rounded-[3px] flex items-center">
        <div className="w-[26px] flex justify-center pr-[3px]"><Down /></div>
        Properties
      </div>
      <div className="h-[27px] shrink-0 flex items-center">
        <div className="w-[24px] flex justify-center"><S w={12} h={13} c="#333"><path d="M1 1H11L10 11L7 12L1 11Z" /><path d="M8 1V12" /></S></div>
        <span className="ml-[40px]">Generic Perspective</span>
      </div>
      <div className="h-[21px] shrink-0 ml-[3px] w-[174px] bg-[#e4e4e4] border border-[#999] flex items-center justify-center">Settings...</div>
      <div className="h-[3px] shrink-0" />
    </div>
  )
}

export default function App() {
  return (
    <div className="w-[1918px] h-[1018px] flex flex-col overflow-hidden bg-[#efefef] font-['Noto_Sans',sans-serif] antialiased">
      <div className="h-[19px] shrink-0 bg-white flex items-center text-[11.3px] text-[#111]">
        <div className="flex gap-[13.7px] pl-[5px]">
          {['File', 'Edit', 'View', 'Design', 'Document', 'Options', 'Teamwork', 'Window', 'Help'].map(m => <span key={m}>{m}</span>)}
        </div>
        <div className="ml-auto flex items-center gap-[7px] pr-[3px]">
          <S w={7} h={9} c="#222" sw={2}><path d="M0 8H7" /></S>
          <S w={8} h={9} c="#222"><rect x="0.5" y="2.5" width="5" height="6" strokeWidth="1.6" /><path d="M3 0.5H7.5V6" /></S>
          <S w={7} h={9} c="#222" sw={1.6}><path d="M0 1L7 8M7 1L0 8" /></S>
        </div>
      </div>
      <TopBar />
      <InfoBar />
      <div className="flex-1 min-h-0 flex">
        <ToolBox />
        <div className="flex-1 min-w-0 flex flex-col">
          <Tabs />
          <Canvas />
          <NavBar />
        </div>
        <ProjectMap />
      </div>
      <div className="h-[22px] shrink-0 border-t border-[#d0d0d0] flex items-center justify-end">
        <div className="h-full w-[27px] flex items-center justify-center border-r border-[#d0d0d0]">
          <S w={16} h={14} c="#333" sw={1.2}><rect x="0.5" y="0.5" width="11" height="9" /><rect x="3.5" y="3.5" width="12" height="10" fill="#efefef" /><path d="M3.5 5H15.5" strokeWidth="2" /></S>
        </div>
        <div className="h-full w-[130px] flex items-center justify-center border-r border-[#d0d0d0] text-[14px] text-[#444] tracking-[-0.3px]">
          GRAPHISOFT<span className="ml-[3px] text-[#777]">ID</span>
        </div>
        <div className="w-[24px]" />
      </div>
    </div>
  )
}
